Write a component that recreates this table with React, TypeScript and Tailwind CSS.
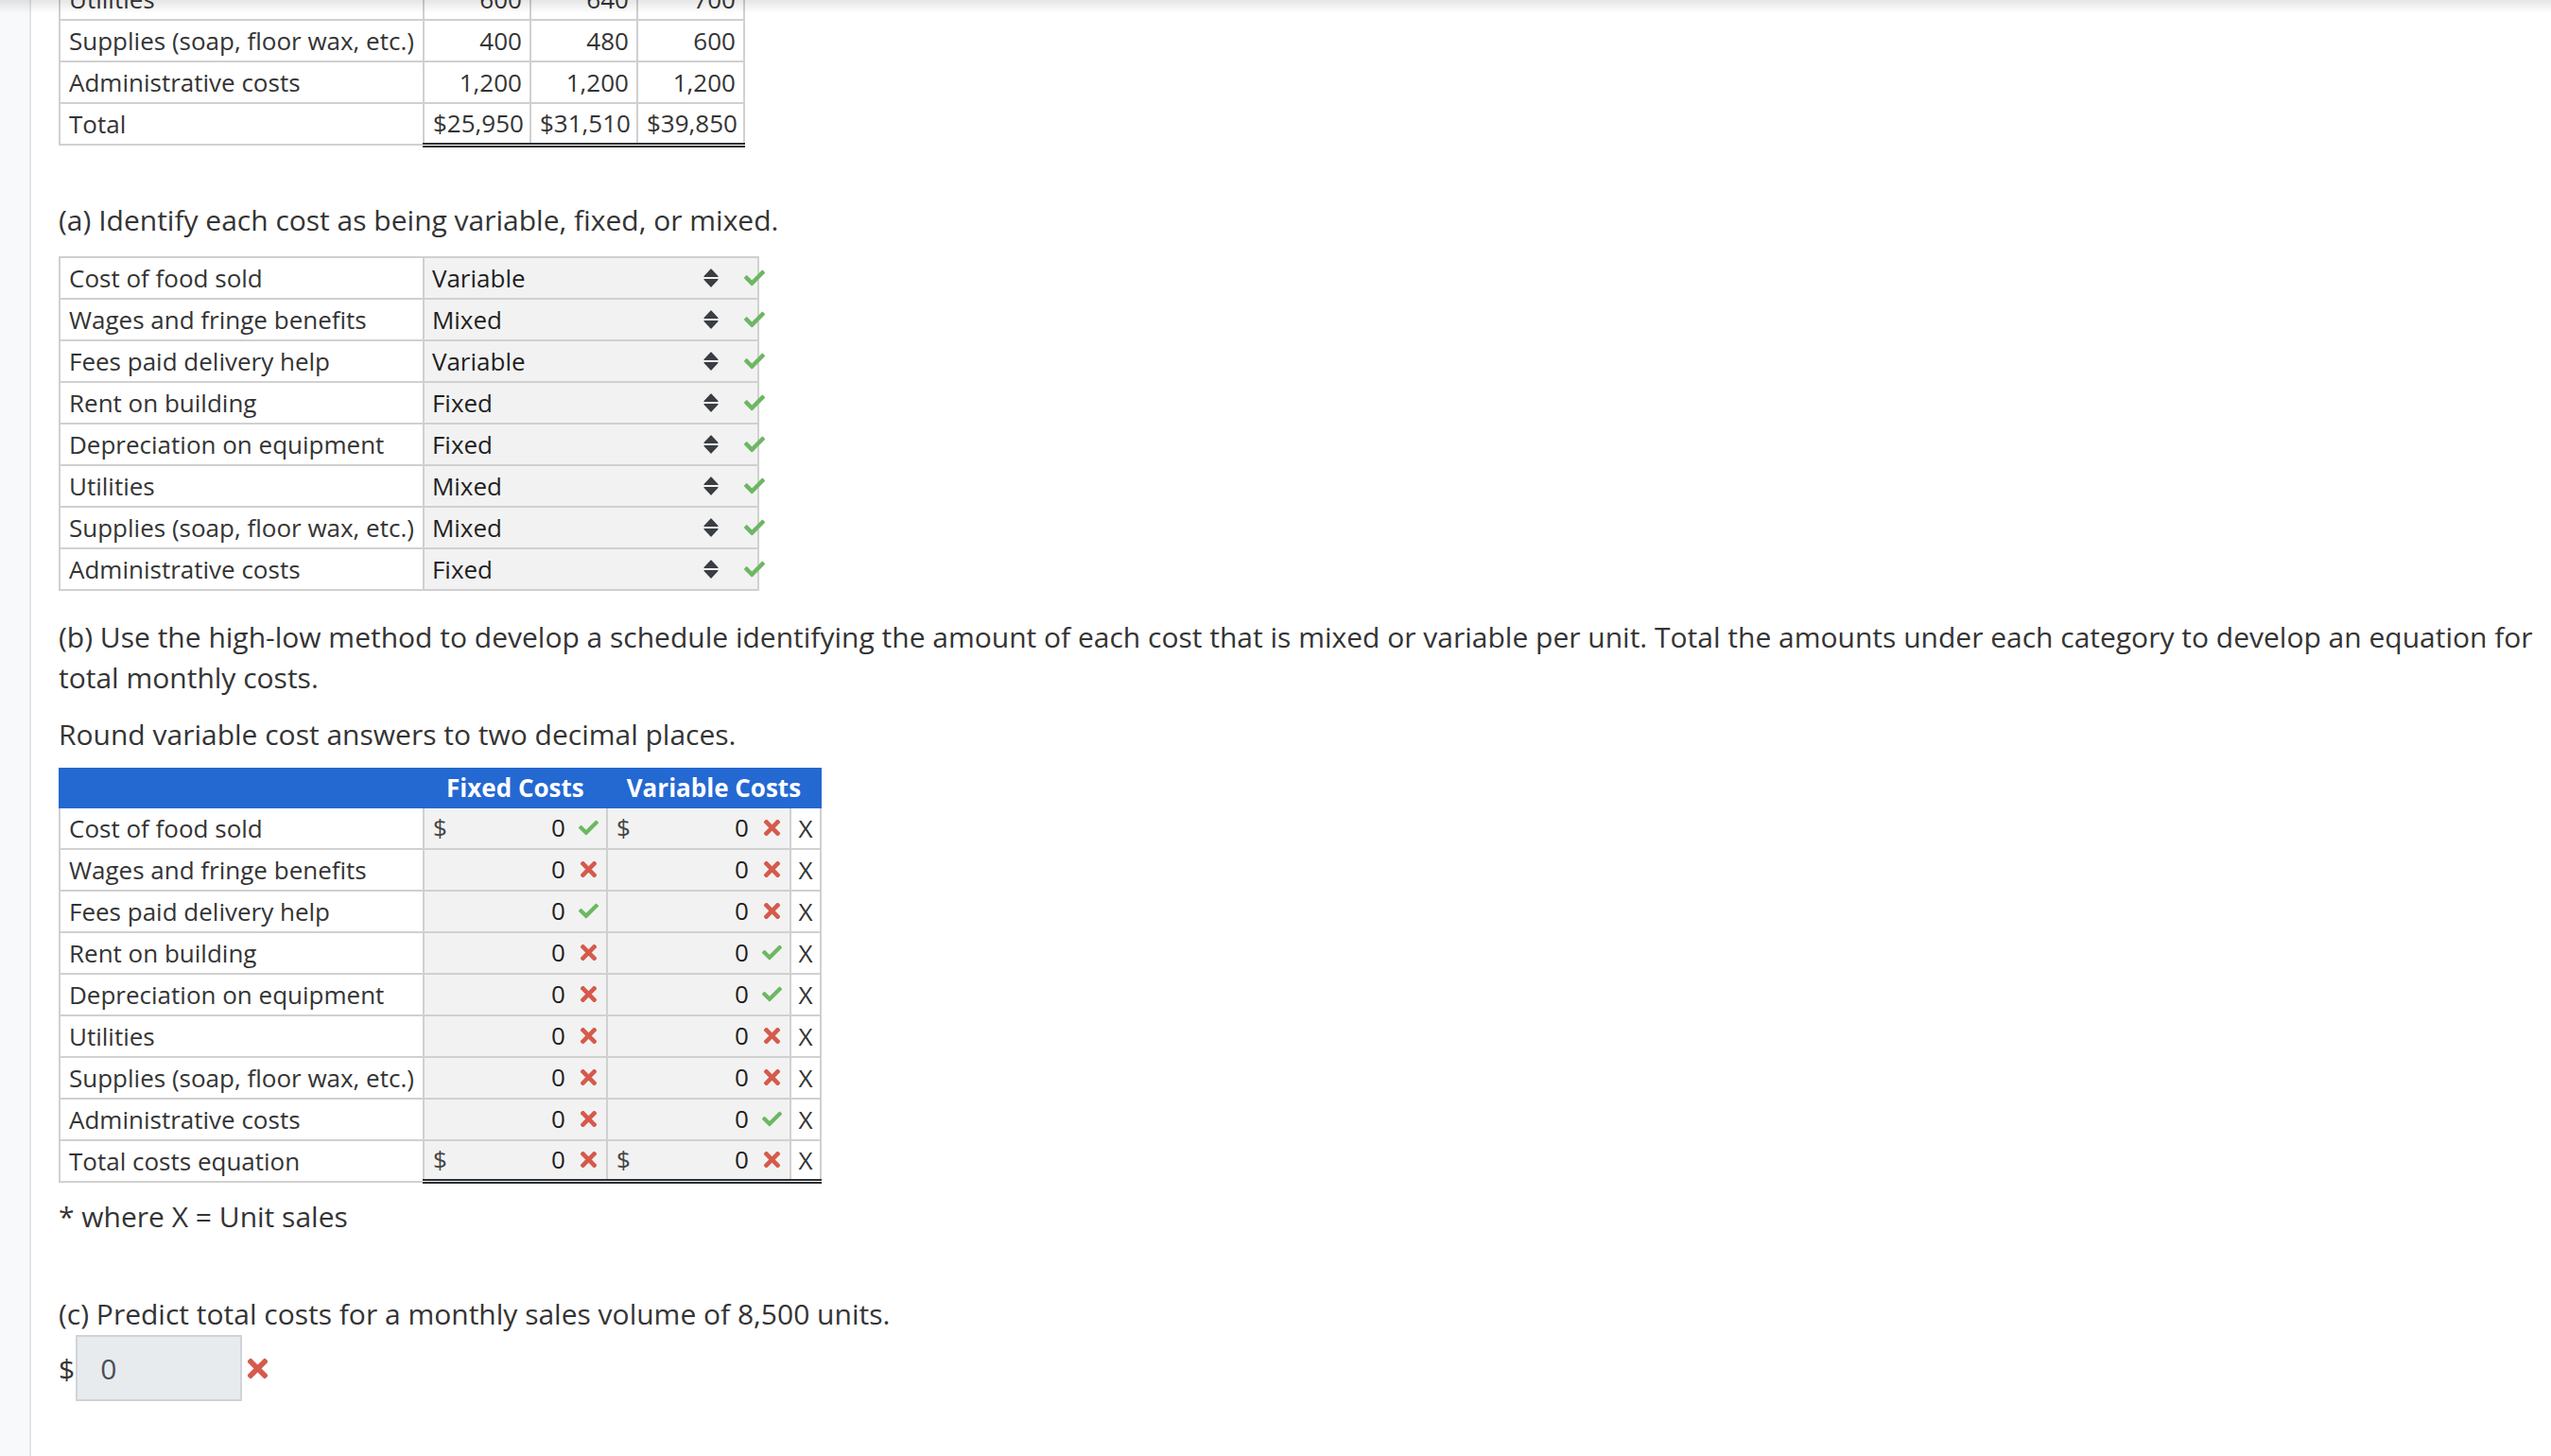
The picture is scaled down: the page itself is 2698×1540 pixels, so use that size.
import { FaCheck, FaTimes } from "react-icons/fa"

const font = { fontFamily: '"Open Sans", "Noto Sans", sans-serif' }

const costs = [
  "Cost of food sold",
  "Wages and fringe benefits",
  "Fees paid delivery help",
  "Rent on building",
  "Depreciation on equipment",
  "Utilities",
  "Supplies (soap, floor wax, etc.)",
  "Administrative costs",
]

const kinds = ["Variable", "Mixed", "Variable", "Fixed", "Fixed", "Mixed", "Mixed", "Fixed"]

// true = correct (green check), false = wrong (red x)
const fixedOk = [true, false, true, false, false, false, false, false]
const varOk = [false, false, false, true, true, false, false, true]

function SortArrows() {
  return (
    <svg width="16" height="20" viewBox="0 0 16 20" className="shrink-0">
      <polygon points="8,1 15,8.5 1,8.5" fill="#3a3e43" stroke="#3a3e43" strokeWidth="1.2" strokeLinejoin="round" />
      <polygon points="1,11.5 15,11.5 8,19" fill="#3a3e43" stroke="#3a3e43" strokeWidth="1.2" strokeLinejoin="round" />
    </svg>
  )
}

function Mark({ ok, big }: { ok: boolean; big?: boolean }) {
  if (ok) return <FaCheck size={21} color="#6cb862" />
  return <FaTimes size={big ? 31 : 25} color="#d65a4c" />
}

function MoneyCell({ ok, dollar, total, last }: { ok: boolean; dollar?: boolean; total?: boolean; last?: boolean }) {
  return (
    <td
      className={
        "h-[44px] border-2 border-[#d0d0d0] bg-[#f2f2f2] p-0 " +
        (total ? "border-b-[5px] border-b-[#2c2f32] border-double " : "") +
        (last ? "border-b-[#111] " : "")
      }
    >
      <div className="flex items-center pl-[9px]">
        <span className="text-[#444]">{dollar ? "$" : ""}</span>
        <span className="flex-1 text-right text-[#1e1e1e]">0</span>
        <span className="ml-[7px] flex w-[36px] justify-center">
          <Mark ok={ok} />
        </span>
      </div>
    </td>
  )
}

export default function App() {
  return (
    <div className="relative flex h-[1540px] overflow-hidden bg-white text-[#343434]" style={font}>
      {/* header shadow from the bar above */}
      <div className="pointer-events-none absolute left-0 right-0 top-0 h-[14px] bg-gradient-to-b from-black/10 to-transparent" />

      <div className="w-[33px] shrink-0 border-r-2 border-[#e2e4e7] bg-[#f8f9fa]" />

      <div className="flex-1 pl-[29px] pr-[14px]">
        {/* top table, scrolled partly out of view */}
        <table className="mt-[-24px] table-fixed border-collapse text-[26px]">
          <colgroup>
            <col className="w-[377px]" />
            <col className="w-[113px]" />
            <col className="w-[113px]" />
            <col className="w-[113px]" />
          </colgroup>
          <tbody>
            {[
              ["Utilities", "600", "640", "700"],
              ["Supplies (soap, floor wax, etc.)", "400", "480", "600"],
              ["Administrative costs", "1,200", "1,200", "1,200"],
            ].map((r, i) => (
              <tr key={r[0]}>
                <td className="h-[44px] border-2 border-[#d0d0d0] px-[9px] leading-none whitespace-nowrap">{r[0]}</td>
                {r.slice(1).map((v, j) => (
                  <td
                    key={j}
                    className={
                      "h-[44px] border-2 border-[#d0d0d0] px-[8px] text-right leading-none " +
                      (i === 2 ? "border-b-[#111]" : "")
                    }
                  >
                    {v}
                  </td>
                ))}
              </tr>
            ))}
            <tr>
              <td className="h-[44px] border-2 border-[#d0d0d0] px-[9px] leading-none">Total</td>
              {["$25,950", "$31,510", "$39,850"].map((v) => (
                <td
                  key={v}
                  className="h-[44px] border-2 border-b-[5px] border-[#d0d0d0] border-b-[#2c2f32] border-double px-[6px] text-right leading-none"
                >
                  {v}
                </td>
              ))}
            </tr>
          </tbody>
        </table>

        {/* part a */}
        <p className="mt-[55px] text-[30px] leading-[43px]">(a) Identify each cost as being variable, fixed, or mixed.</p>
        <table className="mt-[17px] table-fixed border-collapse text-[26px]">
          <colgroup>
            <col className="w-[377px]" />
            <col className="w-[354px]" />
          </colgroup>
          <tbody>
            {costs.map((c, i) => (
              <tr key={c}>
                <td className="h-[44px] border-2 border-[#d0d0d0] px-[9px] leading-none whitespace-nowrap">{c}</td>
                <td className="relative h-[44px] border-2 border-[#d0d0d0] bg-[#f2f2f2] p-0 leading-none">
                  <div className="flex items-center pl-[8px] pr-[41px]">
                    <span className="flex-1 text-[#1f1f1f]">{kinds[i]}</span>
                    <SortArrows />
                  </div>
                  <span className="absolute right-[-8px] top-1/2 -translate-y-1/2">
                    <FaCheck size={22} color="#6cb862" />
                  </span>
                </td>
              </tr>
            ))}
          </tbody>
        </table>

        {/* part b */}
        <p className="mt-[27px] text-[30px] leading-[43px]">
          (b) Use the high-low method to develop a schedule identifying the amount of each cost that is mixed or variable
          per unit. Total the amounts under each category to develop an equation for total monthly costs.
        </p>
        <p className="mt-[17px] text-[30px] leading-[43px]">Round variable cost answers to two decimal places.</p>

        <table className="mt-[14px] table-fixed border-collapse text-[26px]">
          <colgroup>
            <col className="w-[377px]" />
            <col className="w-[194px]" />
            <col className="w-[194px]" />
            <col className="w-[32px]" />
          </colgroup>
          <thead>
            <tr className="bg-[#2468d2] text-white">
              <th className="h-[41px] border-2 border-[#2468d2]" />
              <th className="h-[41px] border-2 border-[#2468d2] text-center font-bold leading-none">Fixed Costs</th>
              <th colSpan={2} className="h-[41px] border-2 border-[#2468d2] text-center font-bold leading-none">
                Variable Costs
              </th>
            </tr>
          </thead>
          <tbody>
            {costs.map((c, i) => (
              <tr key={c}>
                <td className="h-[44px] border-2 border-[#d0d0d0] px-[9px] leading-none whitespace-nowrap">{c}</td>
                <MoneyCell ok={fixedOk[i]} dollar={i === 0} last={i === 7} />
                <MoneyCell ok={varOk[i]} dollar={i === 0} last={i === 7} />
                <td
                  className={
                    "h-[44px] border-2 border-[#d0d0d0] text-center leading-none text-[#333] " +
                    (i === 7 ? "border-b-[#111]" : "")
                  }
                >
                  X
                </td>
              </tr>
            ))}
            <tr>
              <td className="h-[44px] border-2 border-[#d0d0d0] px-[9px] leading-none">Total costs equation</td>
              <MoneyCell ok={false} dollar total />
              <MoneyCell ok={false} dollar total />
              <td className="h-[44px] border-2 border-b-[5px] border-[#d0d0d0] border-b-[#2c2f32] border-double text-center leading-none">
                X
              </td>
            </tr>
          </tbody>
        </table>

        <p className="mt-[13px] text-[30px] leading-[43px]">* where X = Unit sales</p>

        {/* part c */}
        <p className="mt-[60px] text-[30px] leading-[43px]">(c) Predict total costs for a monthly sales volume of 8,500 units.</p>
        <div className="mt-[1px] flex items-center text-[30px]">
          <span className="pr-[1px]">$</span>
          <div className="flex h-[70px] w-[176px] items-center border-2 border-[#cfd4d9] bg-[#e8ebee] pl-[24px] text-[#4a4f55]">
            0
          </div>
          <span className="ml-[1px] flex items-center">
            <Mark ok={false} big />
          </span>
        </div>
      </div>
    </div>
  )
}
